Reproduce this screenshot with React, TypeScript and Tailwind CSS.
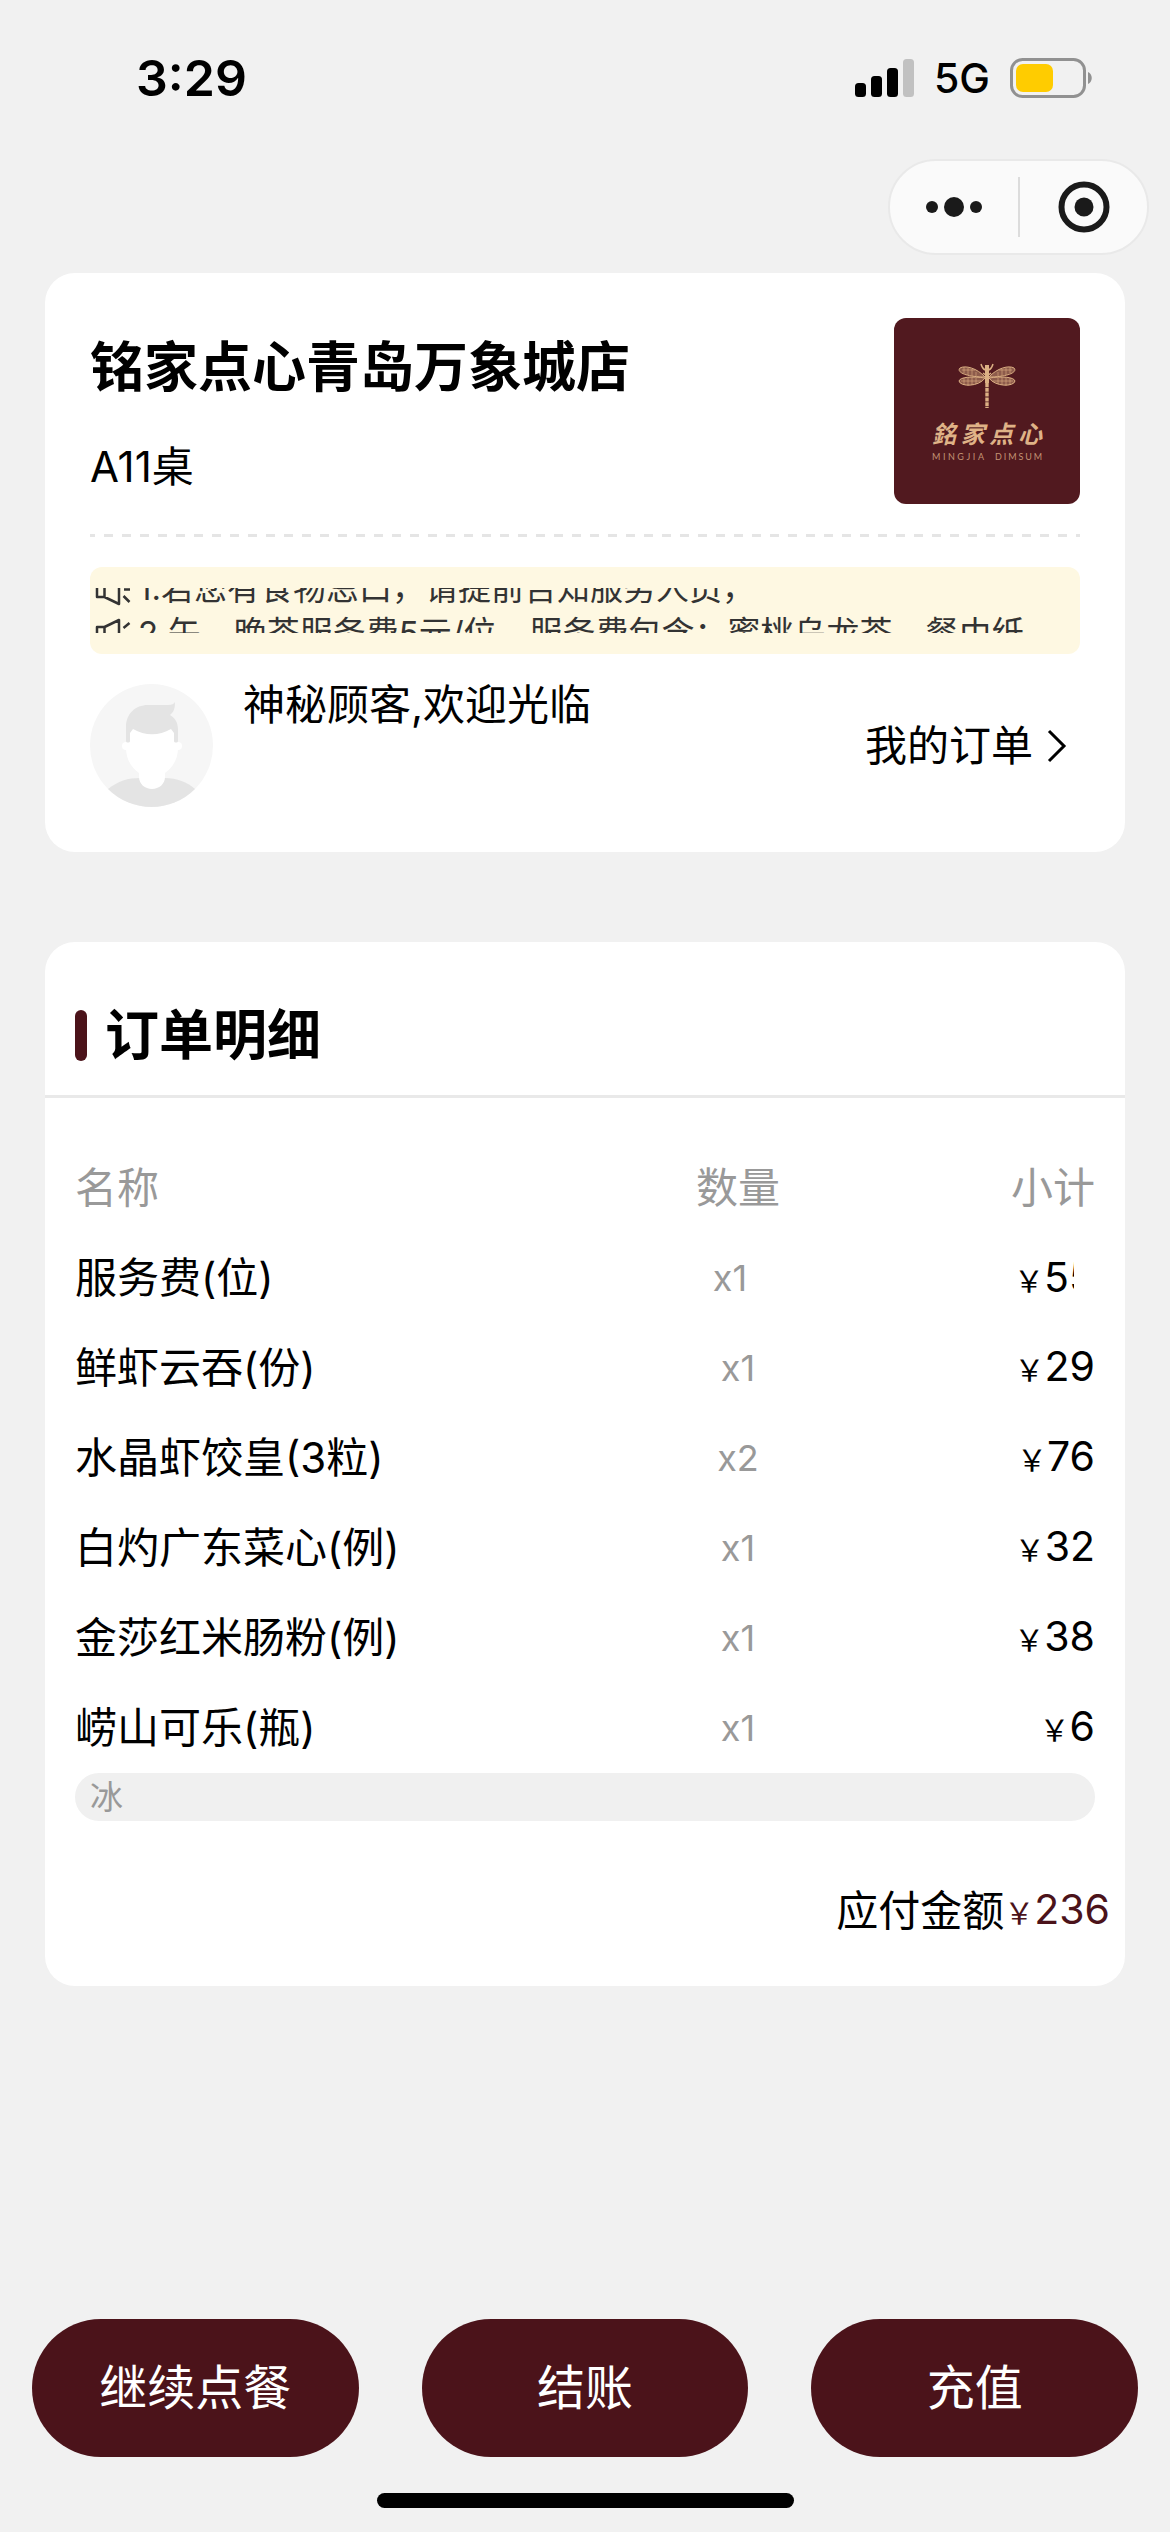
import type { ReactNode } from "react"

type Item = { name: string; qty: string; price: string; note?: string; scrolling?: boolean }

const items: Item[] = [
  { name: "服务费(位)", qty: "x1", price: "55", scrolling: true },
  { name: "鲜虾云吞(份)", qty: "x1", price: "29" },
  { name: "水晶虾饺皇(3粒)", qty: "x2", price: "76" },
  { name: "白灼广东菜心(例)", qty: "x1", price: "32" },
  { name: "金莎红米肠粉(例)", qty: "x1", price: "38" },
  { name: "崂山可乐(瓶)", qty: "x1", price: "6", note: "冰" },
]

const notices = [
  "1.若您有食物忌口，请提前告知服务人员，",
  "2.午、晚茶服务费5元/位，服务费包含：蜜桃乌龙茶、餐巾纸",
]

const actions = ["继续点餐", "结账", "充值"]

function StatusBar() {
  return (
    <header className="flex h-[156px] items-center justify-between pl-[136px] pr-[77px]">
      <span className="text-[50px] font-semibold leading-none">3:29</span>
      <div className="flex items-center gap-5">
        <svg width="59" height="38" viewBox="0 0 59 38" aria-hidden="true">
          <rect x="0" y="24" width="11" height="14" rx="3.5" />
          <rect x="16" y="17" width="11" height="21" rx="3.5" />
          <rect x="32" y="9" width="11" height="29" rx="3.5" />
          <rect x="48" y="0" width="11" height="38" rx="3.5" fill="#c1c1c1" />
        </svg>
        <span className="text-[41px] font-medium leading-none">5G</span>
        <svg width="83" height="40" viewBox="0 0 83 40" aria-hidden="true">
          <rect x="1.5" y="1.5" width="73" height="37" rx="11" fill="none" stroke="#919191" strokeWidth="3" />
          <rect x="6" y="6" width="37" height="28" rx="7" fill="#ffcc00" />
          <path d="M78 14c5 2 5 10 0 12z" fill="#919191" />
        </svg>
      </div>
    </header>
  )
}

function Capsule() {
  return (
    <div className="flex justify-end pb-[18px] pr-[21px] pt-[3px]">
      <div className="flex h-24 w-[261px] items-center rounded-full border-2 border-[#e9e9e9] bg-[#fafafa]">
        <button type="button" aria-label="更多" className="flex flex-1 justify-center">
          <svg width="60" height="24" viewBox="0 0 60 24" fill="#1a1a1a">
            <circle cx="8" cy="12" r="6" />
            <circle cx="30" cy="12" r="10" />
            <circle cx="52" cy="12" r="6" />
          </svg>
        </button>
        <span className="h-[60px] w-[2px] bg-[#dcdcdc]" />
        <button type="button" aria-label="关闭" className="flex flex-1 justify-center">
          <svg width="54" height="54" viewBox="0 0 54 54">
            <circle cx="28" cy="27" r="22.5" fill="none" stroke="#1a1a1a" strokeWidth="6" />
            <circle cx="28" cy="27" r="9.5" fill="#1a1a1a" />
          </svg>
        </button>
      </div>
    </div>
  )
}

function Dragonfly() {
  return (
    <svg width="60" height="46" viewBox="0 0 60 46" fill="none" stroke="#dcb084" aria-hidden="true">
      <g fill="#8d5b4b" strokeWidth="1">
        <path d="M28 14C20 5 8 2 3 5c-4 4 6 9 25 9z" />
        <path d="M32 14C40 5 52 2 57 5c4 4-6 9-25 9z" />
        <path d="M28 15C15 13 3 14 2 18c1 6 20 6 26-3z" />
        <path d="M32 15c13-2 25-1 26 3-1 6-20 6-26-3z" />
      </g>
      <path
        d="M7 4v6M11 5v7M15 6v7M19 9v4M5 7h13M7 15v7M11 14v9M15 14v8M19 15v6M4 18h20M53 4v6M49 5v7M45 6v7M41 9v4M55 7H42M53 15v7M49 14v9M45 14v8M41 15v6M56 18H36"
        strokeWidth="0.6"
      />
      <path d="M24 1c1 4 2 5 4 6M36 1c-1 4-2 5-4 6M26 10l4 3 4-3" strokeWidth="1.4" />
      <path d="M30 2v18" strokeWidth="4" />
      <path d="M30 20v25" strokeWidth="3.4" strokeDasharray="4 0.8" />
    </svg>
  )
}

function ShopLogo() {
  return (
    <div className="flex h-[186px] w-[186px] shrink-0 flex-col items-center rounded-xl bg-[#51191f] pt-[45px] text-[#dfb287]">
      <Dragonfly />
      <div className="mt-[12px] flex w-[110px] justify-between text-[24px] font-bold italic leading-[28px]">
        {["銘", "家", "点", "心"].map(c => <span key={c}>{c}</span>)}
      </div>
      <div className="mt-[2px] flex w-[110px] justify-between font-[Lato] text-[9px] leading-[12px] text-[#c39374]">
        <span className="flex w-[52px] justify-between">
          {"MINGJIA".split("").map((c, i) => <span key={i}>{c}</span>)}
        </span>
        <span className="flex w-[47px] justify-between">
          {"DIMSUM".split("").map((c, i) => <span key={i}>{c}</span>)}
        </span>
      </div>
    </div>
  )
}

function Speaker() {
  return (
    <svg width="36" height="40" viewBox="0 0 36 40" fill="none" stroke="#333" strokeWidth="2.5" strokeLinejoin="round" aria-hidden="true">
      <path d="M2 14h7.5L24 7v29L9.5 29H2zM9.5 14v15" />
      <path d="M28.5 15l6-5M29 21.5h6M28.5 28l6 6" />
    </svg>
  )
}

function NoticeBar() {
  return (
    <div className="mt-[30px] rounded-xl bg-[#fef8e2] py-[21px] pl-[5px]">
      {/* the ticker rests halfway between two lines */}
      <div className="flex h-[45px] flex-col justify-center overflow-hidden">
        {notices.map(text => (
          <p key={text} className="flex h-[45px] shrink-0 items-center gap-[7px] whitespace-nowrap text-[33px] leading-[45px] text-[#333]">
            <Speaker />
            {text}
          </p>
        ))}
      </div>
    </div>
  )
}

function Avatar() {
  return (
    <svg width="123" height="123" viewBox="0 0 123 123" role="img" aria-label="头像">
      <clipPath id="avatar-round">
        <circle cx="61.5" cy="61.5" r="61.5" />
      </clipPath>
      <g clipPath="url(#avatar-round)">
        <rect width="123" height="123" fill="#f6f6f6" />
        <path d="M18 105C28 97 38 94 50 94h25c12 0 22 4 30 11v18H18z" fill="#e4e4e4" />
        <g fill="#fff">
          <circle cx="36" cy="62" r="4" />
          <circle cx="88" cy="62" r="4" />
          <path d="M38 42h48l2 22c0 12-6 20-13 25v4c0 7-6 12-13 12s-13-5-13-12v-4c-7-5-13-13-13-25z" />
        </g>
        <path
          d="M36 57V43c0-13 9-22 22-22h20c4 0 6-1 7-3 0 6-1 10-5 13 5 3 8 7 8 15v11c0 2-4 2-4 0v-8l-3-4c-12 7-26 7-38 0l-3 4v8c0 2-4 2-4 0z"
          fill="#e4e4e4"
        />
      </g>
    </svg>
  )
}

function Card({ className = "", children }: { className?: string; children: ReactNode }) {
  return <section className={`mx-[45px] rounded-[30px] bg-white ${className}`}>{children}</section>
}

function Price({ value, scrolling }: { value: string; scrolling?: boolean }) {
  return (
    <span className={scrolling ? "mr-[21px] inline-block w-[60px] overflow-hidden whitespace-nowrap align-middle" : "whitespace-nowrap"}>
      <span className="text-[30px]">￥</span>{value}
    </span>
  )
}

function ShopCard() {
  return (
    <Card className="px-[45px] pb-[45px] pt-[45px]">
      <div className="flex justify-between">
        <div className="pt-3">
          <h1 className="text-[54px] font-bold leading-[75px]">铭家点心青岛万象城店</h1>
          <p className="mt-8 text-[42px] leading-[60px]">A11桌</p>
        </div>
        <ShopLogo />
      </div>
      <div className="mt-[30px] h-[3px] bg-[repeating-linear-gradient(90deg,#e5e5e5_0_5px,transparent_5px_14px,#e5e5e5_14px_18px)]" />
      <NoticeBar />
      <div className="mt-[30px] flex">
        <Avatar />
        <p className="ml-[30px] text-[42px] leading-[42px]">神秘顾客,欢迎光临</p>
        <a href="#orders" className="ml-auto flex items-center gap-[14px] pr-[13px] text-[42px] leading-[60px]">
          我的订单
          <svg width="20" height="34" viewBox="0 0 20 34" fill="none" stroke="#000" strokeWidth="3" aria-hidden="true">
            <path d="M2 2l15 15L2 32" />
          </svg>
        </a>
      </div>
    </Card>
  )
}

function OrderCard() {
  return (
    <Card className="mt-[90px] pb-[30px]">
      <div className="border-b-[3px] border-[#e9e9e9] px-[30px] pt-[33px]">
        <h2 className="flex h-[120px] items-center gap-[18px] text-[54px] font-bold leading-[75px]">
          <span className="h-[51px] w-3 rounded-full bg-[#4b131a]" />
          订单明细
        </h2>
      </div>
      <div className="px-[30px] pt-[45px]">
        <table className="w-full table-fixed text-[42px] leading-[60px]">
          <thead>
            <tr className="h-[90px] text-[#999]">
              <th className="w-1/2 p-0 text-left font-normal">名称</th>
              <th className="w-[30%] p-0 text-center font-normal">数量</th>
              <th className="w-1/5 p-0 text-right font-normal">小计</th>
            </tr>
          </thead>
          {items.map(item => (
            <tbody key={item.name}>
              <tr className="h-[90px]">
                <td className="p-0">{item.name}</td>
                <td className={`p-0 text-center text-[36px] text-[#999] ${item.scrolling ? "pr-4" : ""}`}>{item.qty}</td>
                <td className="p-0 text-right text-[41px]"><Price value={item.price} scrolling={item.scrolling} /></td>
              </tr>
              {item.note && (
                <tr>
                  <td colSpan={3} className="p-0">
                    <div className="rounded-full bg-[#f0f0f0] px-[15px] text-[33px] leading-[48px] text-[#999]">{item.note}</div>
                  </td>
                </tr>
              )}
            </tbody>
          ))}
        </table>
      </div>
      <p className="mt-[45px] flex h-[90px] items-center justify-end pr-[15px] text-[42px] leading-[60px]">
        应付金额
        <span className="text-[41px] text-[#4b131a]"><Price value="236" /></span>
      </p>
    </Card>
  )
}

export default function App() {
  return (
    <main className="flex min-h-screen flex-col bg-[#f1f1f1] font-[Inter,'Noto_Sans_CJK_SC',sans-serif] text-black">
      <StatusBar />
      <Capsule />
      <ShopCard />
      <OrderCard />
      <footer className="mt-auto px-8 pb-6 pt-[60px]">
        <div className="flex gap-[63px]">
          {actions.map(label => (
            <button key={label} type="button" className="h-[138px] flex-1 rounded-full bg-[#4b131a] text-[48px] text-white">
              {label}
            </button>
          ))}
        </div>
        <div className="mx-auto mt-9 h-[15px] w-[417px] rounded-full bg-black" />
      </footer>
    </main>
  )
}
